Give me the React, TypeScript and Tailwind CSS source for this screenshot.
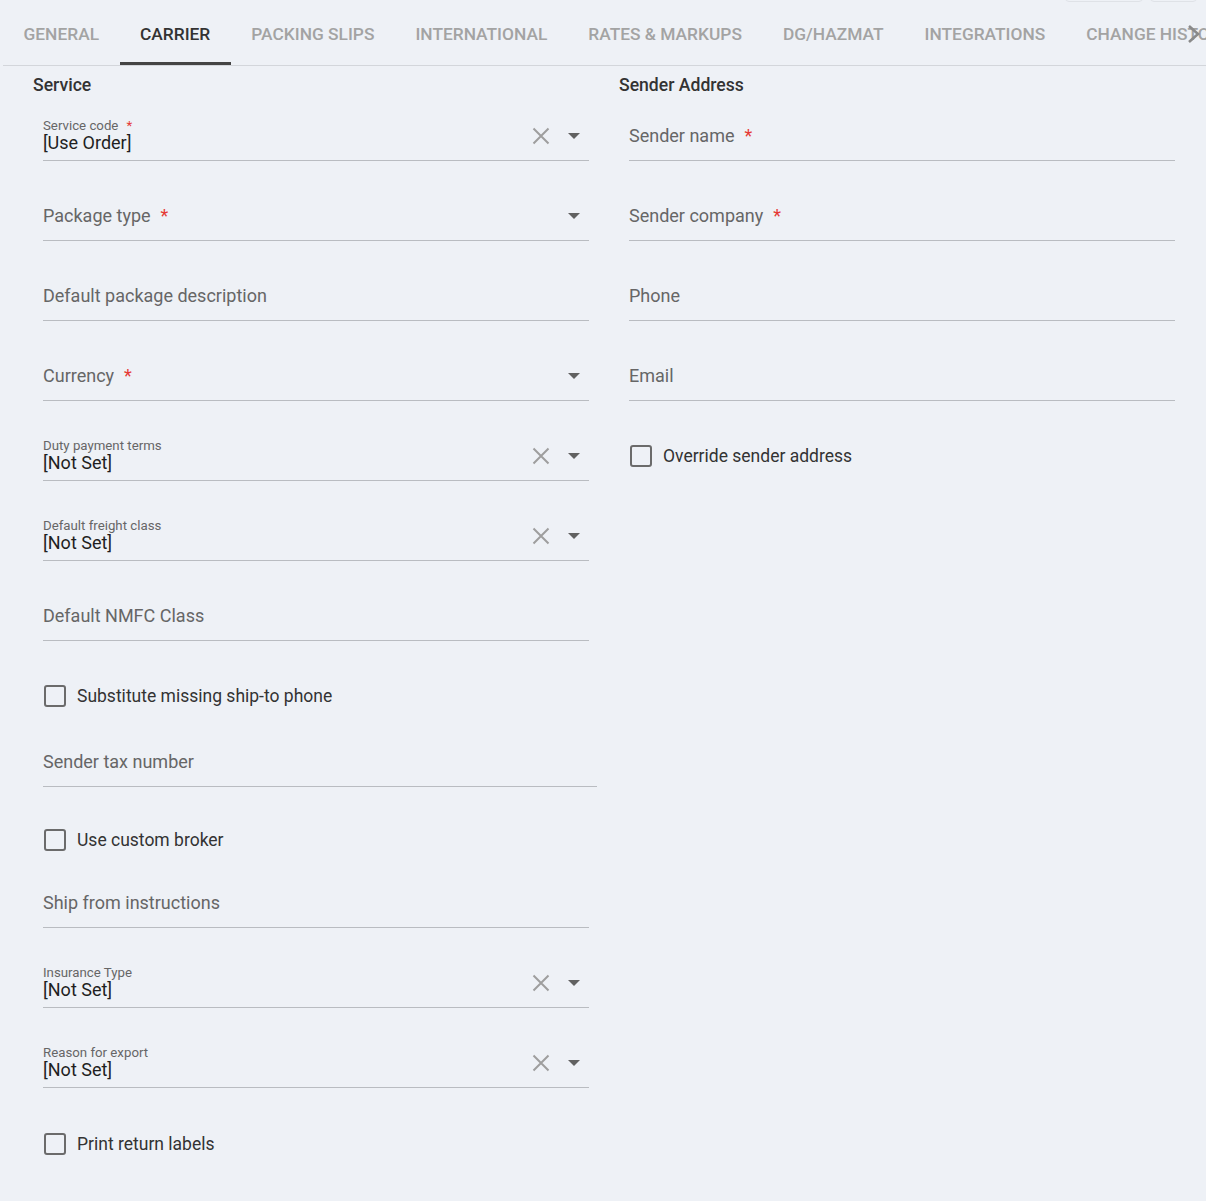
import React from "react";

const tabs = [
  "General",
  "Carrier",
  "Packing Slips",
  "International",
  "Rates & Markups",
  "DG/Hazmat",
  "Integrations",
  "Change History",
];

type Item =
  | { kind: "input"; label: string; required?: boolean; mt: string; wide?: boolean }
  | { kind: "select"; label: string; required?: boolean; value?: string; clear?: boolean; mt: string }
  | { kind: "check"; label: string; mt: string };

const leftItems: Item[] = [
  { kind: "select", label: "Service code", required: true, value: "[Use Order]", clear: true, mt: "mt-0" },
  { kind: "select", label: "Package type", required: true, mt: "mt-6" },
  { kind: "input", label: "Default package description", mt: "mt-6" },
  { kind: "select", label: "Currency", required: true, mt: "mt-6" },
  { kind: "select", label: "Duty payment terms", value: "[Not Set]", clear: true, mt: "mt-6" },
  { kind: "select", label: "Default freight class", value: "[Not Set]", clear: true, mt: "mt-6" },
  { kind: "input", label: "Default NMFC Class", mt: "mt-6" },
  { kind: "check", label: "Substitute missing ship-to phone", mt: "mt-[43px]" },
  { kind: "input", label: "Sender tax number", mt: "mt-[23px]", wide: true },
  { kind: "check", label: "Use custom broker", mt: "mt-[41px]" },
  { kind: "input", label: "Ship from instructions", mt: "mt-5" },
  { kind: "select", label: "Insurance Type", value: "[Not Set]", clear: true, mt: "mt-6" },
  { kind: "select", label: "Reason for export", value: "[Not Set]", clear: true, mt: "mt-6" },
  { kind: "check", label: "Print return labels", mt: "mt-[44px]" },
];

const rightItems: Item[] = [
  { kind: "input", label: "Sender name", required: true, mt: "mt-0" },
  { kind: "input", label: "Sender company", required: true, mt: "mt-6" },
  { kind: "input", label: "Phone", mt: "mt-6" },
  { kind: "input", label: "Email", mt: "mt-6" },
  { kind: "check", label: "Override sender address", mt: "mt-[43px]" },
];

const Star = () => <span className="ml-[10px] text-[#e53935]">*</span>;

const ClearIcon = () => (
  <svg width="18" height="18" viewBox="0 0 18 18" className="block">
    <path d="M1.5 1.5 L16.5 16.5 M16.5 1.5 L1.5 16.5" stroke="#9e9e9e" strokeWidth="2" fill="none" />
  </svg>
);

const ArrowIcon = () => (
  <svg width="12" height="6" viewBox="0 0 12 6" className="block">
    <polygon points="0,0 12,0 6,6" fill="#616161" />
  </svg>
);

const Field = ({ item }: { item: Item }) => {
  if (item.kind === "check") {
    return (
      <div className={`${item.mt} flex items-center h-6 pl-px`}>
        <span className="w-[22px] h-[22px] rounded-[3px] border-2 border-[#6b6b6b] shrink-0" />
        <span className="ml-[11px] text-[17.5px] text-[#333]">{item.label}</span>
      </div>
    );
  }

  const width = item.kind === "input" && item.wide ? "w-[554px]" : "w-[546px]";
  const hasValue = item.kind === "select" && item.value;

  return (
    <div className={`${item.mt} ${width} h-14 border-b border-[#b9bcc1] flex items-end`}>
      <div className="flex-1 min-w-0">
        {hasValue ? (
          <div className="pb-[6px]">
            <div className="text-[13.25px] leading-[14px] text-[#666]">
              {item.label}
              {item.required && <span className="ml-[8px] text-[#e53935]">*</span>}
            </div>
            <div className="-mt-px text-[18px] leading-[22px] text-[#1f1f1f]">{item.value}</div>
          </div>
        ) : (
          <div className="pb-3 text-[18px] leading-6 text-[#666]">
            {item.label}
            {item.required && <Star />}
          </div>
        )}
      </div>
      {item.kind === "select" && (
        <div className="flex items-center h-6 mb-3 pr-[9px]">
          {item.clear && (
            <span className="mr-[18px]">
              <ClearIcon />
            </span>
          )}
          <ArrowIcon />
        </div>
      )}
    </div>
  );
};

const Column = ({ title, items }: { title: string; items: Item[] }) => (
  <div className="w-[566px]">
    <h2 className="text-[17.6px] leading-6 font-medium text-[#333]">{title}</h2>
    <div className="mt-2 pl-[10px] flex flex-col">
      {items.map((item, i) => (
        <Field key={i} item={item} />
      ))}
    </div>
  </div>
);

export default function App() {
  return (
    <div
      className="min-h-[1201px] bg-[#eef1f6] pl-[3px] relative overflow-hidden"
      style={{ fontFamily: "Roboto, 'Noto Sans', Arial, sans-serif" }}
    >
      {/* faint edges of toolbar buttons above the tab strip */}
      <div className="absolute top-[-20px] left-[1065px] w-[78px] h-[22px] rounded-[4px] border border-[#dfe2e7]" />
      <div className="absolute top-[-20px] left-[1150px] w-[47px] h-[22px] rounded-[4px] border border-[#dfe2e7]" />

      {/* tabs */}
      <div className="relative h-[66px] border-b border-[#d3d6db] overflow-hidden">
        <div className="flex h-full whitespace-nowrap">
          {tabs.map((t) => {
            const active = t === "Carrier";
            return (
              <div
                key={t}
                className={`h-full px-[20.5px] pt-[7px] flex items-center border-b-[3px] uppercase text-[17.35px] font-medium ${
                  active ? "border-[#444] text-[#333]" : "border-transparent text-[#a3a3a3]"
                }`}
              >
                {t}
              </div>
            );
          })}
        </div>
        <div className="absolute right-[4px] top-[24px]">
          <svg width="16" height="20" viewBox="0 0 16 20">
            <path d="M3 2 L12 10 L3 18" stroke="#8a8a8a" strokeWidth="2.6" fill="none" />
          </svg>
        </div>
      </div>

      {/* form */}
      <div className="flex gap-5 pl-[30px] pt-[7px] pb-10">
        <Column title="Service" items={leftItems} />
        <Column title="Sender Address" items={rightItems} />
      </div>
    </div>
  );
}
